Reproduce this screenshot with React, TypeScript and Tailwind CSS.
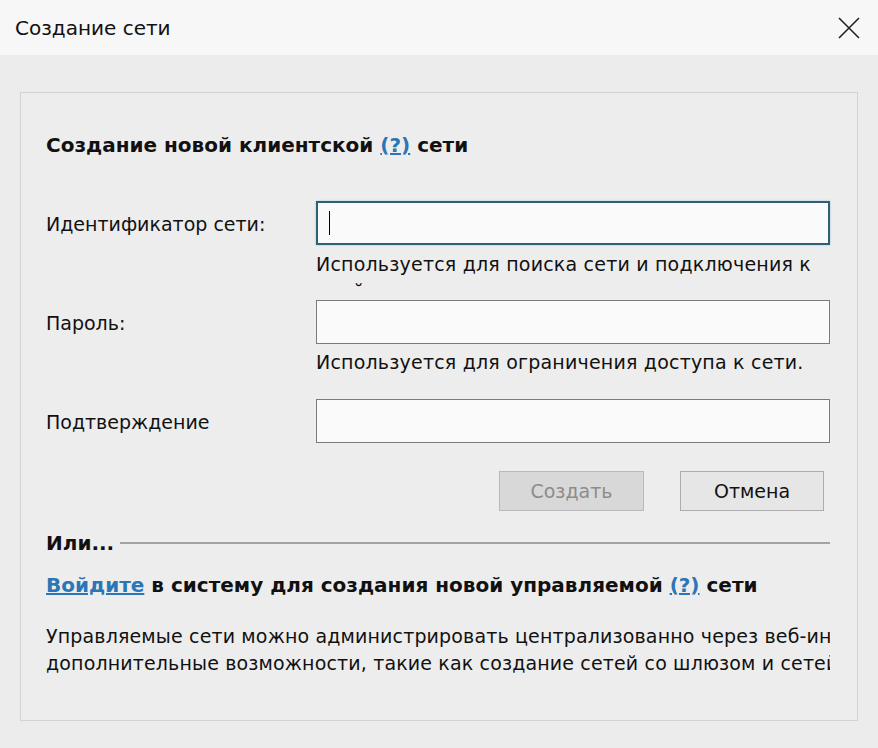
import React from "react";

const font = { fontFamily: '"DejaVu Sans", "Noto Sans", sans-serif' };

function Field({
  label,
  hint,
  focused,
}: {
  label: string;
  hint?: React.ReactNode;
  focused?: boolean;
}) {
  return (
    <div className="flex">
      <div className="w-[271px] pt-[10px] text-[19px] leading-[26px] text-[#111]">{label}</div>
      <div className="flex-1">
        <div
          className={`h-[44px] w-[514px] bg-[#fafafa] flex items-center pl-[11px] ${
            focused ? "border-2 border-[#2f5f74] shadow-[0_0_2px_#9cc6d8]" : "border border-[#7a7a7a]"
          }`}
        >
          {focused && <div className="w-px h-[24px] bg-black" />}
        </div>
        {hint}
      </div>
    </div>
  );
}

export default function App() {
  return (
    <div className="w-[878px] h-[748px] bg-[#ececec] overflow-hidden" style={font}>
      <div className="h-[55px] bg-[#f7f7f7] flex items-center justify-between pl-[15px] pr-[18px]">
        <span className="text-[20px] text-[#111]">Создание сети</span>
        <svg width="22" height="22" viewBox="0 0 22 22" className="text-[#222]">
          <path d="M1 1 L21 21 M21 1 L1 21" stroke="currentColor" strokeWidth="1.6" />
        </svg>
      </div>
      <div className="pt-[37px] px-[20px]">
        <div className="h-[629px] border border-[#d3d3d3] bg-[#ededed] pl-[25px] pr-[27px] overflow-hidden">
          <div className="pt-[38px] text-[20px] leading-[28px] font-bold text-[#111]">
            Создание новой клиентской{" "}
            <span className="text-[#2b76b6] underline">(?)</span> сети
          </div>
          <div className="mt-[42px] flex flex-col">
            <Field
              label="Идентификатор сети:"
              focused
              hint={
                <div className="h-[42px] overflow-hidden text-[19px] leading-[27px] pt-[6px] tracking-[0.2px] text-[#111]">
                  Используется для поиска сети и подключения к<br />
                  <span className="pl-[12px]">ней.</span>
                </div>
              }
            />
            <div className="mt-[13px]">
              <Field
                label="Пароль:"
                hint={
                  <div className="text-[19px] leading-[26px] pt-[5px] tracking-[0.2px] text-[#111]">
                    Используется для ограничения доступа к сети.
                  </div>
                }
              />
            </div>
            <div className="mt-[24px]">
              <Field label="Подтверждение" />
            </div>
          </div>
          <div className="mt-[28px] flex justify-end gap-[36px] pr-[6px]">
            <button className="w-[145px] h-[40px] bg-[#d8d8d8] border border-[#b9b9b9] text-[19px] text-[#8c8c8c]">
              Создать
            </button>
            <button className="w-[144px] h-[40px] bg-[#e6e6e6] border border-[#acacac] text-[19px] text-[#111]">
              Отмена
            </button>
          </div>
          <div className="mt-[18px] flex items-center gap-[6px]">
            <span className="text-[20px] leading-[28px] font-bold text-[#111]">Или...</span>
            <div className="flex-1 h-[2px] bg-[#a3a3a3]" />
          </div>
          <div className="mt-[14px] text-[20px] leading-[28px] font-bold text-[#111]">
            <span className="text-[#2b76b6] underline">Войдите</span> в систему для создания новой
            управляемой <span className="text-[#2b76b6] underline">(?)</span> сети
          </div>
          <div className="mt-[24px] text-[19px] leading-[27px] tracking-[0.15px] text-[#111] whitespace-nowrap overflow-hidden">
            <div>Управляемые сети можно администрировать централизованно через веб-интерфейс и</div>
            <div>дополнительные возможности, такие как создание сетей со шлюзом и сетей</div>
          </div>
        </div>
      </div>
    </div>
  );
}
